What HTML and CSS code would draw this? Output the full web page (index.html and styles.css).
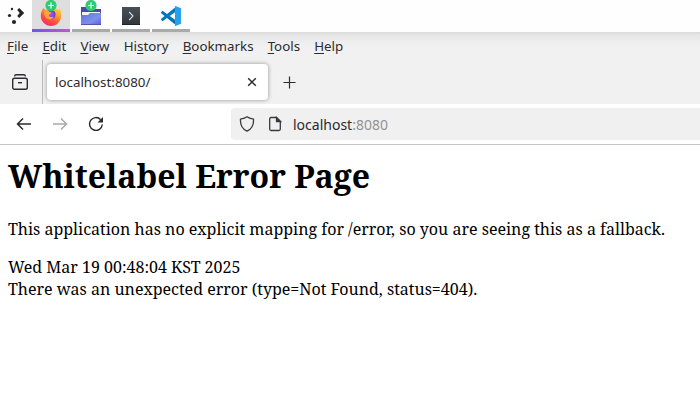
FILE: index.html
```
<!DOCTYPE html>
<html lang="en">
<head>
<meta charset="utf-8">
<title>localhost:8080/</title>
<link rel="stylesheet" href="styles.css">
</head>
<body>
<div class="taskbar">
  <svg class="launcher" width="32" height="32" viewBox="0 0 32 32" fill="#232629"><circle cx="12" cy="9" r="1.2"/><circle cx="9.5" cy="15.5" r="1.6"/><circle cx="14" cy="22" r="2.1"/><path d="M17.2 10l2-2 5 5-5 5-2-2 2.500-3z"/></svg>
  <div class="task active">
    <svg width="38" height="29" viewBox="0 0 38 29">
      <defs>
        <linearGradient id="fire" x1=".8" y1="0" x2=".3" y2="1"><stop offset="0" stop-color="#ffe43e"/><stop offset=".38" stop-color="#ffa52d"/><stop offset=".7" stop-color="#ff5140"/><stop offset="1" stop-color="#f22a69"/></linearGradient>
        <radialGradient id="globe"><stop offset="0" stop-color="#a458ea"/><stop offset="1" stop-color="#5948cf"/></radialGradient>
      </defs>
      <path fill="url(#fire)" d="M11.500 8l2 2 3-.7 4-5 3 4 3.500 2-.2-2.100c2.200 2 2.700 4.300 2.400 8-.5 5.600-4.800 9.800-10.200 9.800S8.800 21.500 8.800 16c0-3.500 1-6 2.700-8z"/>
      <circle cx="18.800" cy="14.500" r="4.800" fill="url(#globe)"/>
      <path fill="#ffa436" d="M12.500 10.500c2-.5 4 0 5 1.500l2 .3c-.1 1.400-1.900 1.600-2.500 2.600-.4 1.500 1.500 2.700 4.600 1.900-.8 2.400-3 3.100-5.100 2.500-3.400-1-5-4.500-4-8.800z"/>
    </svg>
    <svg class="badge" width="12" height="12" viewBox="0 0 12 12"><circle cx="6" cy="5.500" r="5.600" fill="#2ecc71"/><path d="M6 2.500v6M3 5.500h6" stroke="#fff" stroke-width="1.200"/></svg>
  </div>
  <div class="task">
    <svg width="38" height="29" viewBox="0 0 38 29">
      <defs><linearGradient id="folder" x1="0" y1="0" x2="1" y2="1"><stop offset="0" stop-color="#5f74d6"/><stop offset=".6" stop-color="#7f8ff0"/><stop offset="1" stop-color="#5a62d0"/></linearGradient></defs>
      <path fill="#464ba6" d="M9 7h8l2 2h10v15H9z"/><path fill="#f4f4f8" d="M10 12h18v3H10z"/><path fill="url(#folder)" d="M9 15h7l2-2h11v12H9z"/><path fill="#5058b4" d="M9 24h20v1H9z"/>
    </svg>
    <svg class="badge" width="12" height="12" viewBox="0 0 12 12"><circle cx="6" cy="5.500" r="5.600" fill="#2ecc71"/><path d="M6 2.500v6M3 5.500h6" stroke="#fff" stroke-width="1.200"/></svg>
  </div>
  <div class="task">
    <svg width="38" height="29" viewBox="0 0 38 29"><defs><linearGradient id="term" x1="0" y1="0" x2="0" y2="1"><stop offset="0" stop-color="#485057"/><stop offset="1" stop-color="#31363b"/></linearGradient></defs><path fill="url(#term)" d="M10 7h18v18H10z"/><path d="M10 24.500h18" stroke="#202428"/><path d="M17.200 12l3.800 4-3.800 4" fill="none" stroke="#d9dcde" stroke-width="1.100"/></svg>
  </div>
  <div class="task">
    <svg width="38" height="29" viewBox="0 0 38 29"><path fill="#0072b8" d="M9 12.200l1.500-1.500L24 20.500v4.800L9.200 13.200z"/><path fill="#0078c8" d="M9 19.800l1.500 1.500L24 11.500V6.700L9.200 18.800z"/><path fill="#27a0ec" d="M23.500 6l5.500 2.300v15.400L23.500 26c-.6 0-.5-.8-.5-1.300V7.300c0-.5-.1-1.300.5-1.300z"/></svg>
  </div>
</div>
<header class="chrome">
  <nav class="menu"><span><u>F</u>ile</span><span><u>E</u>dit</span><span><u>V</u>iew</span><span>Hi<u>s</u>tory</span><span><u>B</u>ookmarks</span><span><u>T</u>ools</span><span><u>H</u>elp</span></nav>
  <div class="tabs">
    <div class="recent"><svg width="16" height="16" viewBox="0 0 16 16" fill="none" stroke="#2b2b30" stroke-width="1.400"><path d="M2.500 2.400Q2.800.8 4.200.8h7.600q1.400 0 1.700 1.600"/><rect x=".7" y="4.300" width="14.600" height="11" rx="1.800"/><path d="M6 8.700h4"/></svg></div>
    <div class="tab"><span>localhost:8080/</span><svg width="10" height="10" viewBox="0 0 10 10" stroke="#2b2b30" stroke-width="1.500"><path d="M1.200 1.200l7.600 7.600M8.800 1.200L1.200 8.800"/></svg></div>
    <svg class="plus" width="13" height="13" viewBox="0 0 13 13" stroke="#2b2b30" stroke-width="1.200"><path d="M6.500.5v12M.5 6.500h12"/></svg>
  </div>
</header>
<div class="toolbar">
  <svg width="16" height="16" viewBox="0 0 16 16" fill="none" stroke="#2b2b30" stroke-width="1.500"><path d="M15 8H1.700M7 2.500L1.500 8 7 13.500"/></svg>
  <svg class="forward" width="16" height="16" viewBox="0 0 16 16" fill="none" stroke="#aaaaac" stroke-width="1.500"><path d="M1 8h13.300M9 2.500L14.500 8 9 13.500"/></svg>
  <svg class="reload" width="16" height="16" viewBox="0 0 16 16" fill="none" stroke="#2b2b30" stroke-width="1.400"><path d="M14.300 8.500A6.400 6.400 0 1 1 12.700 3.700"/><path d="M15 1v5.500H9.500z" fill="#2b2b30" stroke="none"/></svg>
  <div class="url">
    <svg width="16" height="16" viewBox="0 0 16 16" fill="none" stroke="#3a3a3e" stroke-width="1.300"><path d="M8 .8C6 2.400 3.600 2.800 1.500 3.100c-.4 5.400 1.500 9.800 6.500 12.100 5-2.300 6.900-6.700 6.500-12.100C12.400 2.800 10 2.400 8 .8z" stroke-linejoin="round"/></svg>
    <svg class="page" width="14" height="16" viewBox="0 0 14 16" fill="none" stroke="#3a3a3e" stroke-width="1.300"><path d="M8.500 1.500H3Q1.700 1.500 1.700 3v10q0 1.500 1.300 1.500h8q1.300 0 1.300-1.500V5.500z"/><path d="M8.500 1.500v4h4z" fill="#3a3a3e"/></svg>
    <span>localhost<i>:8080</i></span>
  </div>
</div>
<main>
  <h1>Whitelabel Error Page</h1>
  <p>This application has no explicit mapping for /error, so you are seeing this as a fallback.</p>
  <div>Wed Mar 19 00:48:04 KST 2025</div>
  <div>There was an unexpected error (type=Not Found, status=404).</div>
</main>
</body>
</html>
```
FILE: styles.css
```
* { box-sizing: border-box; }
body { margin: 0; background: #fff; font-family: "Noto Sans", sans-serif; color: #2b2b30; overflow: hidden; }
svg { display: block; flex: none; }
.taskbar { display: flex; gap: 2px; height: 32px; background: #fefefe; }
.launcher { margin-right: -2px; }
.task { position: relative; width: 38px; height: 32px; border-bottom: 3px solid #a9aaaa; }
.task.active { background: #dedede; border-bottom: 0; }
.task.active::after { content: ""; display: block; height: 3px; background: linear-gradient(90deg, #6b57ec, #c455d0); }
.badge { position: absolute; left: 12.500px; top: 0; }
.chrome { height: 72px; background: linear-gradient(#dadada 0, #e5e5e5 3px, #ececec 8px, #f1f1f1 15px); }
.menu { display: flex; gap: 14.1px; height: 28px; padding-left: 7px; font-size: 13.333px; line-height: 29px; }
.menu u { text-decoration-thickness: 1px; text-underline-offset: 2px; }
.tabs { display: flex; height: 44px; }
.recent { width: 43px; border-right: 1px solid #bbb; padding: 14px 0 0 12px; }
.tab { display: flex; align-items: center; justify-content: space-between; width: 221px; height: 36px; margin: 4px 0 0 4px; padding: 0 11px 0 8px; border-radius: 4px; background: #fff; box-shadow: 0 0 4px rgba(0,0,0,.4); font-size: 13.333px; }
.plus { margin: 16px 0 0 15px; }
.toolbar { display: flex; align-items: center; height: 41px; padding-left: 16px; border-bottom: 1px solid #c5c5c5; }
.forward { margin-left: 20px; }
.reload { margin-left: 20px; }
.url { display: flex; align-items: center; flex: 1; height: 32px; margin-left: 127px; padding-left: 8px; border-radius: 4px 0 0 4px; background: #f0f0f0; font-size: 14px; }
.page { margin-left: 13px; }
.url span { margin-left: 11px; }
.url i { font-style: normal; color: #929292; }
main { padding: 9px 8px; color: #000; font: 16px/22px "Noto Serif", serif; }
h1 { margin: 0 0 20px; font-size: 32px; line-height: 44px; }
p { margin: 0 0 16px; }
```
